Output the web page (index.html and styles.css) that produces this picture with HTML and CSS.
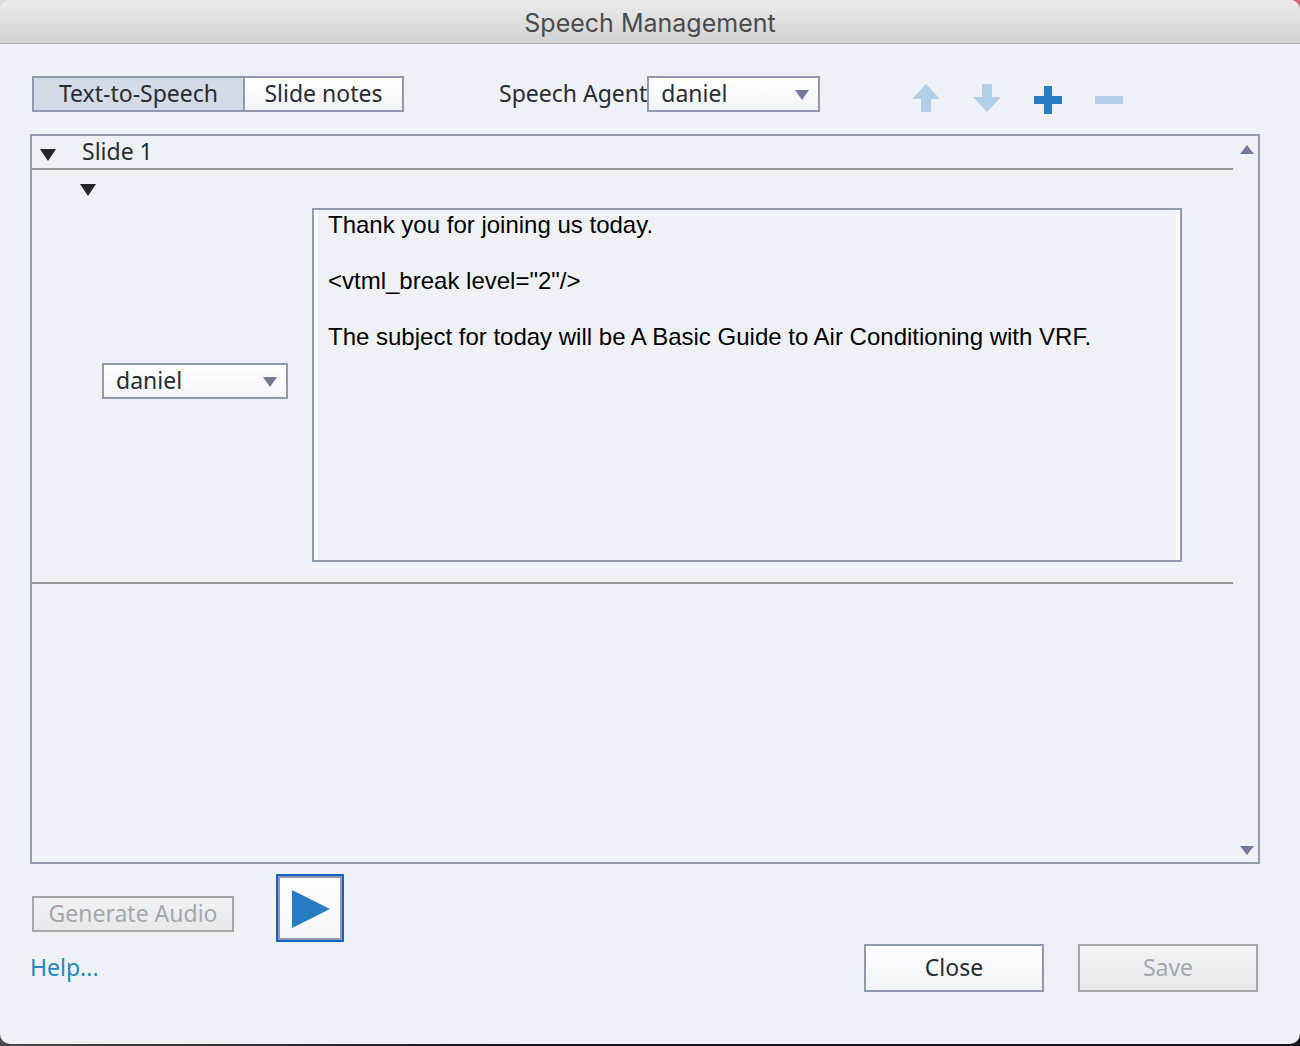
FILE: index.html
```html
<!DOCTYPE html>
<html lang="en">
<head>
  <meta charset="UTF-8">
  <title>Speech Management</title>
  <meta name="viewport" content="width=device-width, initial-scale=1.0">
  <link rel="stylesheet" href="styles.css">
</head>
<body>
  <div class="dialog">
    <header class="titlebar">
      <h1>Speech Management</h1>
    </header>

    <main class="content">
      <!-- Source buttons, default agent and caption actions -->
      <div class="toolbar">
        <div class="tabs">
          <button type="button" class="tab active" aria-pressed="true">Text-to-Speech</button>
          <button type="button" class="tab" aria-pressed="false">Slide notes</button>
        </div>
        <div class="agent">
          <label for="agentSelect">Speech Agent</label>
          <select id="agentSelect" class="select">
            <option selected>daniel</option>
          </select>
        </div>
        <div class="actions">
          <button type="button" class="icon-btn" aria-label="Move up" disabled>
            <svg width="28" height="28" viewBox="0 0 28 28"><path d="M14 0L28 15H19V28H9V15H0Z"/></svg>
          </button>
          <button type="button" class="icon-btn" aria-label="Move down" disabled>
            <svg width="28" height="28" viewBox="0 0 28 28"><path d="M14 28L28 13H19V0H9V13H0Z"/></svg>
          </button>
          <button type="button" class="icon-btn low" aria-label="Add">
            <svg width="28" height="28" viewBox="0 0 28 28"><path d="M10 0H18V10H28V18H18V28H10V18H0V10H10Z"/></svg>
          </button>
          <button type="button" class="icon-btn low" aria-label="Remove" disabled>
            <svg width="28" height="28" viewBox="0 0 28 28"><path d="M0 10H28V18H0Z"/></svg>
          </button>
        </div>
      </div>

      <!-- Slide list -->
      <div class="panel">
        <div class="slides">
          <div class="slide-header">
            <button type="button" class="toggle" aria-label="Collapse slide">
              <svg width="16" height="12" viewBox="0 0 16 12"><path d="M0 0H16L8 12Z"/></svg>
            </button>
            <span>Slide 1</span>
          </div>
          <div class="slide-body">
            <button type="button" class="toggle nested" aria-label="Collapse caption">
              <svg width="16" height="12" viewBox="0 0 16 12"><path d="M0 0H16L8 12Z"/></svg>
            </button>
            <div class="caption">
              <select class="select" aria-label="Caption agent">
                <option selected>daniel</option>
              </select>
              <textarea class="caption-text" aria-label="Caption text" spellcheck="false">Thank you for joining us today.

&lt;vtml_break level="2"/&gt;

The subject for today will be A Basic Guide to Air Conditioning with VRF.</textarea>
            </div>
          </div>
        </div>
        <div class="scrollbar">
          <button type="button" class="scroll-btn" aria-label="Scroll up">
            <svg width="14" height="9" viewBox="0 0 14 9"><path d="M7 0L14 9H0Z"/></svg>
          </button>
          <button type="button" class="scroll-btn" aria-label="Scroll down">
            <svg width="14" height="9" viewBox="0 0 14 9"><path d="M0 0H14L7 9Z"/></svg>
          </button>
        </div>
      </div>

      <div class="audio">
        <button type="button" class="btn generate" disabled>Generate Audio</button>
        <button type="button" class="play" aria-label="Play">
          <svg width="38" height="38" viewBox="0 0 38 38"><path d="M0 0L38 19L0 38Z"/></svg>
        </button>
      </div>

      <footer class="footer">
        <a class="help" href="#">Help...</a>
        <div class="footer-buttons">
          <button type="button" class="btn large">Close</button>
          <button type="button" class="btn large" disabled>Save</button>
        </div>
      </footer>
    </main>
  </div>
</body>
</html>
```

FILE: styles.css
```css
* {
  box-sizing: border-box;
}
/* Desktop showing behind the rounded window corners */
body {
  margin: 0;
  background:
    linear-gradient(to right, #dcdcdc 50%, #e0607a 50%) top / 100% 12px no-repeat,
    linear-gradient(to right, #47484d, #16131a 40%);
  color: #292c33;
  font-family: "Noto Sans", "Open Sans", sans-serif;
  font-size: 23px;
  line-height: 32px;
}
button,
select {
  margin: 0;
  padding: 0;
  font: inherit;
  color: inherit;
}
svg {
  display: block;
}

/* Window */
.dialog {
  display: flex;
  flex-direction: column;
  min-height: calc(100vh - 2px);
  border-radius: 10px;
  background: #f0f1f7;
  overflow: hidden;
}
.titlebar {
  padding-top: 3px;
  border-bottom: 1px solid #acacac;
  background: linear-gradient(#ebebeb, #d2d2d2);
  text-align: center;
}
.titlebar h1 {
  margin: 0;
  color: #4b4b4b;
  font-family: Inter, sans-serif;
  font-size: 25px;
  font-weight: 400;
  line-height: 40px;
}
.content {
  display: flex;
  flex: 1;
  flex-direction: column;
  padding: 32px 40px 52px 30px;
}

/* Toolbar */
.toolbar {
  display: flex;
  height: 36px;
  margin: 0 0 22px 2px;
}
.tabs {
  display: flex;
  width: 372px;
  border: 2px solid #9099af;
}
.tab {
  flex: 1;
  padding-bottom: 2px;
  border: 0;
  background: linear-gradient(#fff, #f3f4f9);
  line-height: 30px;
}
.tab.active {
  flex: 0 0 211px;
  border-right: 2px solid #9099af;
  background: #d3dae8;
}
.agent {
  display: flex;
  margin-left: 95px;
  line-height: 34px;
  white-space: nowrap;
}
.agent .select {
  width: 173px;
}
.select {
  height: 36px;
  padding: 0 12px 2px;
  border: 2px solid #9099af;
  border-radius: 0;
  appearance: none;
  line-height: 30px;
  /* drop-down triangle over the button gradient */
  background:
    url("data:image/svg+xml,%3Csvg xmlns='http://www.w3.org/2000/svg' width='14' height='10'%3E%3Cpath d='M0 0H14L7 10Z' fill='%23737a96'/%3E%3C/svg%3E") right 9px top 12px no-repeat,
    linear-gradient(#fff, #f3f4f9);
}
.actions {
  display: flex;
  gap: 33px;
  margin: 8px 0 0 92px;
}
.icon-btn {
  height: 28px;
  border: 0;
  background: none;
  fill: #287cc2;
}
.icon-btn:disabled {
  fill: #b3cee7;
}
.icon-btn.low {
  margin-top: 2px;
}

/* Slide list */
.panel {
  display: flex;
  flex: 1;
  border: 2px solid #919bb0;
}
.slides {
  flex: 1;
}
.slide-header {
  display: flex;
  gap: 26px;
  padding: 0 0 2px 8px;
  border-bottom: 2px solid #989898;
  line-height: 30px;
}
.toggle {
  border: 0;
  background: none;
  fill: #24262d;
}
.slide-header .toggle {
  padding-top: 8px;
}
.slide-body {
  padding: 14px 51px 20px 48px;
  border-bottom: 2px solid #989898;
}
.toggle.nested {
  display: block;
}
.caption {
  display: flex;
  align-items: center;
  gap: 24px;
  margin: 12px 0 0 22px;
}
.caption .select {
  width: 186px;
  margin-bottom: 8px;
}
.caption-text {
  flex: 1;
  height: 354px;
  padding: 1px 14px;
  border: 2px solid #919bb0;
  outline: 0;
  background: #f0f1f6;
  box-shadow: inset 4px 0 #fff, inset -4px 0 #fff;
  color: #000;
  font-family: "Liberation Sans", Arial, sans-serif;
  font-size: 24px;
  line-height: 28px;
  resize: none;
}
.scrollbar {
  display: flex;
  flex-direction: column;
  justify-content: space-between;
  width: 25px;
  padding: 9px 4px 7px 7px;
}
.scroll-btn {
  border: 0;
  background: none;
  fill: #737a98;
}

/* Bottom controls */
.audio {
  display: flex;
  align-items: flex-end;
  gap: 42px;
  margin: 10px 0 2px 2px;
}
.btn {
  height: 36px;
  padding-bottom: 2px;
  border: 2px solid #9099af;
  background: linear-gradient(#fff, #f1f3f8);
  line-height: 30px;
}
.btn:disabled {
  border-color: #a6a7ab;
  background: linear-gradient(#f1f2f6, #e7e8ec);
  color: #a6a7ab;
}
.btn.generate {
  width: 202px;
  margin-bottom: 10px;
}
.btn.large {
  width: 180px;
  height: 48px;
}
.play {
  width: 68px;
  height: 68px;
  padding: 2px 0 0 14px;
  border: 2px solid #1560c4;
  background: linear-gradient(#fff, #f4f5fa);
  box-shadow: inset 0 0 0 2px #9099af;
  fill: #287cc2;
}
.footer {
  display: flex;
  align-items: center;
  justify-content: space-between;
}
.footer-buttons {
  display: flex;
  gap: 34px;
  margin-right: 2px;
}
.help {
  padding-bottom: 2px;
  color: #2089c2;
  text-decoration: none;
}
```
